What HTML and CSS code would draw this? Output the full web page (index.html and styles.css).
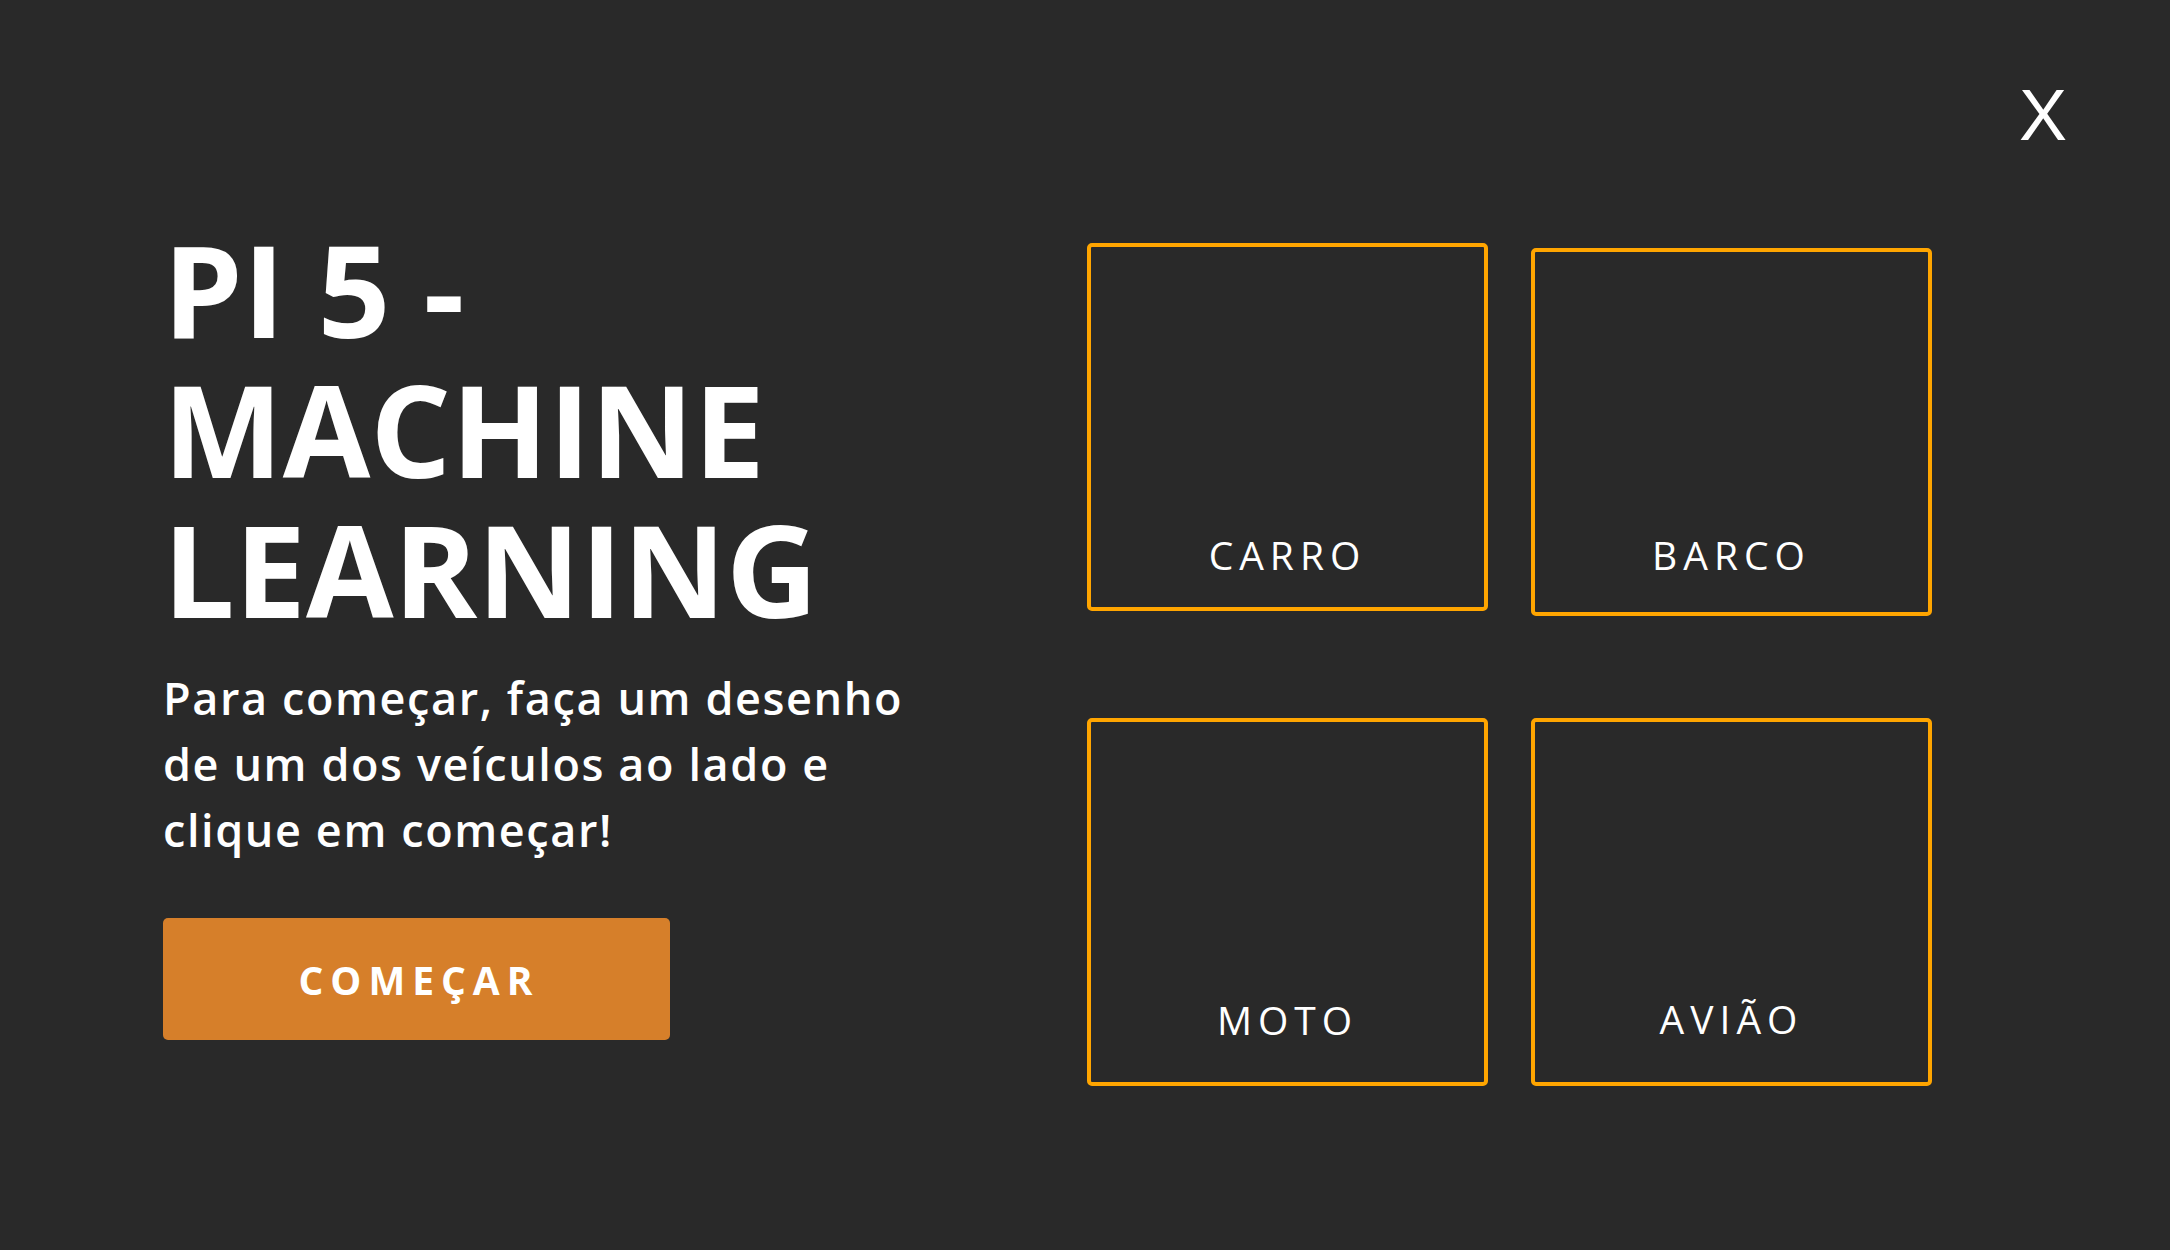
FILE: index.html
```html
<!DOCTYPE html>
<html lang="pt-BR">
<head>
<meta charset="utf-8">
<title>PI 5 - Machine Learning</title>
<link rel="stylesheet" href="styles.css">
</head>
<body>
<button class="close" type="button" aria-label="Fechar">X</button>
<main class="page">
  <section class="intro">
    <h1 class="title">PI 5 - MACHINE LEARNING</h1>
    <p class="lead">Para começar, faça um desenho de um dos veículos ao lado e clique em começar!</p>
    <button class="start" type="button">COMEÇAR</button>
  </section>
  <section class="grid">
    <div class="card card-1"><span class="label">CARRO</span></div>
    <div class="card card-2"><span class="label">BARCO</span></div>
    <div class="card card-3"><span class="label">MOTO</span></div>
    <div class="card card-4"><span class="label">AVIÃO</span></div>
  </section>
</main>
</body>
</html>
```
FILE: styles.css
```css
html, body {
  margin: 0;
  padding: 0;
}
body {
  background: #292929;
  width: 2170px;
  height: 1250px;
  overflow: hidden;
  position: relative;
  font-family: "Open Sans", "Liberation Sans", sans-serif;
  color: #ffffff;
}
.close {
  position: absolute;
  top: 79px;
  left: 2019px;
  margin: 0;
  padding: 0;
  border: 0;
  background: transparent;
  color: #ffffff;
  font-family: "Liberation Sans", Arial, sans-serif;
  font-size: 72px;
  line-height: 72px;
  font-weight: 400;
  cursor: pointer;
}
.page {
  display: flex;
  align-items: flex-start;
  padding: 219px 0 0 163px;
}
.intro {
  flex: 0 0 775px;
  display: flex;
  flex-direction: column;
  align-items: flex-start;
}
.title {
  margin: 0;
  font-size: 127px;
  line-height: 140px;
  font-weight: 700;
  letter-spacing: 0;
}
.lead {
  margin: 26px 0 0 0;
  font-size: 45px;
  line-height: 66px;
  font-weight: 600;
  letter-spacing: 1.6px;
}
.start {
  margin-top: 55px;
  width: 507px;
  height: 122px;
  border: 0;
  border-radius: 5px;
  background: #d67f2a;
  color: #ffffff;
  font-family: "Open Sans", "Liberation Sans", sans-serif;
  font-size: 39px;
  font-weight: 700;
  letter-spacing: 7px;
  padding: 0 0 0 5px;
  cursor: pointer;
}
.grid {
  margin: 24px 0 0 149px;
  display: grid;
  grid-template-columns: 401px 401px;
  column-gap: 43px;
  row-gap: 102px;
  align-items: start;
}
.card {
  box-sizing: border-box;
  height: 368px;
  border: 4px solid #ffa500;
  border-radius: 5px;
  display: flex;
  flex-direction: column;
  justify-content: flex-end;
  align-items: center;
}
.card-2 {
  margin-top: 5px;
}
.label {
  font-size: 39px;
  line-height: 47px;
  font-weight: 400;
  letter-spacing: 6px;
}
.card-1 .label { margin-bottom: 29px; }
.card-2 .label { margin-bottom: 34px; }
.card-3 .label { margin-bottom: 39px; }
.card-4 .label { margin-bottom: 40px; }
```
